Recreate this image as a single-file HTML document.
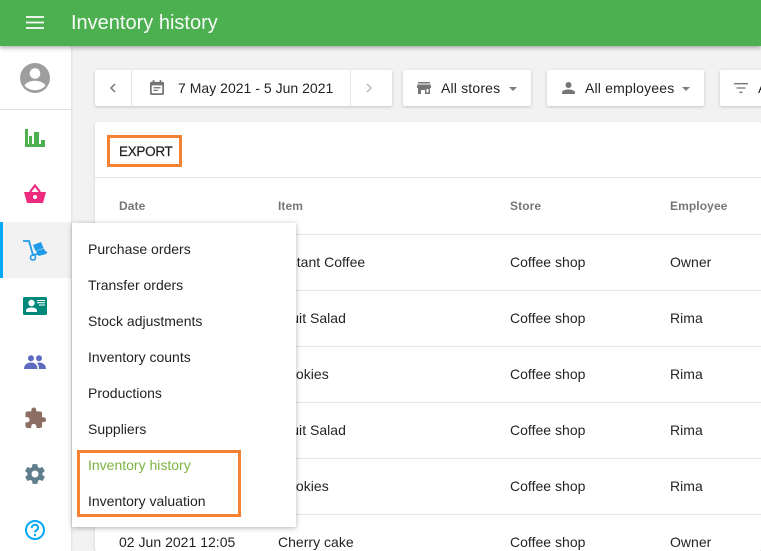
<!DOCTYPE html>
<html><head><meta charset="utf-8"><style>
html,body{margin:0;padding:0;width:761px;height:551px;overflow:hidden}
body{position:relative;background:#f2f2f2;font-family:"Liberation Sans",sans-serif;color:#212121;font-size:14px}
#w{position:absolute;left:0;top:0;width:761px;height:551px;overflow:hidden}
.a{position:absolute;white-space:nowrap}
.t{position:absolute;white-space:nowrap;line-height:20px;letter-spacing:.02px;color:rgba(0,0,0,.87)}
.bar{position:absolute;left:0;top:0;width:761px;height:46px;background:#4caf50;box-shadow:0 2px 4px rgba(0,0,0,.3);z-index:5}
.side{position:absolute;left:0;top:46px;width:71px;height:505px;background:#fff;box-shadow:1px 0 2px rgba(0,0,0,.08)}
.btn{position:absolute;top:70px;height:36px;background:#fff;border-radius:2px;box-shadow:0 1px 3px rgba(0,0,0,.2)}
.card{position:absolute;left:95px;top:122px;width:666px;height:429px;background:#fff;border-radius:2px;box-shadow:0 1px 3px rgba(0,0,0,.15)}
.ln{position:absolute;left:95px;width:666px;height:1px;background:#e6e6e6}
.menu{position:absolute;left:72px;top:223px;width:224px;height:304px;background:#fff;box-shadow:0 1px 5px rgba(0,0,0,.3);z-index:3}
.h{font-weight:bold;font-size:12px;color:rgba(0,0,0,.54);letter-spacing:.1px}
.f{letter-spacing:.17px}
.m{z-index:4;letter-spacing:0}
svg{position:absolute}
</style></head><body><div id="w">
<div class="side"></div>
<div class="a" style="left:0;top:109px;width:71px;height:1px;background:#e0e0e0"></div>
<div class="a" style="left:0;top:222px;width:71px;height:56px;background:#f2f2f2"></div>
<div class="a" style="left:0;top:222px;width:3px;height:56px;background:#03a9f4"></div>

<div class="bar"></div>
<svg style="left:26px;top:16px;z-index:6" width="18" height="14" viewBox="0 0 18 14"><path d="M0 1h18M0 6.500h18M0 12h18" stroke="#fff" stroke-width="1.800"/></svg>
<div class="a" style="left:71px;top:10px;font-size:20px;line-height:26px;z-index:6;color:rgba(255,255,255,.95)">Inventory history</div>

<svg style="left:20px;top:63px" width="30" height="30" viewBox="0 0 30 30"><circle cx="15" cy="15" r="15" fill="#9e9e9e"/><circle cx="15" cy="10.500" r="5.300" fill="#fff"/><path d="M4.500 22.500c1.500-3 6-4.800 10.500-4.800s9 1.800 10.500 4.800c-2.500 3-6.300 4.700-10.500 4.700s-8-1.700-10.500-4.700z" fill="#fff"/></svg>
<svg style="left:25px;top:129px" width="20" height="18" viewBox="0 0 20 18"><path d="M0 0h3v15h1V7h3v8h2V3h5v12h2V11h4v7H0z" fill="#4caf50"/></svg>
<svg style="left:24px;top:183px" width="22" height="20" viewBox="0 0 22 20"><path d="M0 9h22l-3 11H3z" fill="#ec2b7e"/><path d="M6 9l5-6.500L16 9" fill="none" stroke="#ec2b7e" stroke-width="2.200"/><circle cx="11" cy="14" r="2" fill="#fff"/></svg>
<svg style="left:23px;top:240px" width="24" height="21" viewBox="0 0 24 21"><path d="M0 1h6l4 14 14-3" fill="none" stroke="#1e9be8" stroke-width="1.800"/><circle cx="10" cy="17.500" r="2.500" fill="none" stroke="#1e9be8" stroke-width="1.600"/><path d="M10 5l8-3 2.500 6-8 3zM13 11l8-2.500 2.500 5.500-8 2z" fill="#1e9be8"/></svg>
<svg style="left:23px;top:297px" width="24" height="18" viewBox="0 0 24 18"><rect width="24" height="18" rx="1.500" fill="#00897b"/><circle cx="8.500" cy="6" r="3.200" fill="#fff"/><path d="M3 15v-1.500C3 11.500 6 10.500 8.500 10.500s5.500 1 5.500 3V15z" fill="#fff"/><path d="M14 3.500h8M14 5.700h8M16 8h6" stroke="#fff" stroke-width="1.100"/></svg>
<svg style="left:24px;top:355px" width="22" height="14" viewBox="0 0 22 14"><circle cx="7" cy="3.200" r="3" fill="#5c6bc0"/><circle cx="15" cy="3.200" r="3" fill="#5c6bc0"/><path d="M0 14c0-4 3-6.500 7-6.500s6.500 2.500 6.500 6.500zM15 14c0-2.500-.5-4.500-2-6 .7-.3 1.400-.5 2-.5 4 0 7 2.500 7 6.500z" fill="#5c6bc0"/></svg>
<svg style="left:25px;top:407px" width="21.500" height="21.500" viewBox="1.500 .5 22 22"><path fill="#8d6e63" d="M20.500 11H19V7c0-1.100-.9-2-2-2h-4V3.500C13 2.120 11.880 1 10.500 1S8 2.120 8 3.500V5H4c-1.100 0-1.990.9-1.990 2v3.800H3.500c1.490 0 2.700 1.210 2.700 2.700s-1.210 2.700-2.700 2.700H2V20c0 1.100.9 2 2 2h3.800v-1.500c0-1.490 1.210-2.700 2.700-2.700 1.490 0 2.700 1.210 2.700 2.700V22H17c1.100 0 2-.9 2-2v-4h1.500c1.380 0 2.500-1.120 2.500-2.500S21.880 11 20.500 11z"/></svg>
<svg style="left:25px;top:464px" width="20" height="20" viewBox="2 2 20 20"><path fill="#607d8b" d="M19.400 13c0-.3.100-.6.100-1s0-.7-.1-1l2.100-1.600c.2-.2.200-.4.100-.6l-2-3.500c-.1-.2-.4-.3-.6-.2l-2.500 1c-.5-.4-1.100-.7-1.700-1l-.4-2.600c0-.2-.2-.4-.5-.4h-4c-.3 0-.5.200-.5.400l-.4 2.600c-.6.300-1.200.6-1.700 1l-2.500-1c-.2-.1-.5 0-.6.200l-2 3.500c-.1.200-.1.400.1.600L4.500 11c0 .3-.1.700-.1 1s0 .7.100 1l-2.100 1.600c-.2.200-.2.400-.1.600l2 3.500c.1.200.4.300.6.200l2.500-1c.5.400 1.100.7 1.700 1l.4 2.600c0 .2.200.4.500.4h4c.3 0 .5-.2.500-.4l.4-2.600c.6-.3 1.200-.6 1.700-1l2.500 1c.2.100.5 0 .6-.2l2-3.500c.1-.2.100-.4-.1-.6zM12 15.500a3.500 3.500 0 1 1 0-7 3.500 3.500 0 0 1 0 7z"/></svg>
<svg style="left:25px;top:520px" width="20" height="20" viewBox="0 0 20 20"><circle cx="10" cy="10" r="9" fill="none" stroke="#03a9f4" stroke-width="2"/><path d="M6.800 8c0-1.900 1.400-3.200 3.200-3.200s3.200 1.300 3.200 3c0 2.300-3.200 2.500-3.200 4.700" fill="none" stroke="#03a9f4" stroke-width="2"/><path d="M9 14h2v2.200H9z" fill="#03a9f4"/></svg>

<div class="btn" style="left:95px;width:297px"></div>
<div class="a" style="left:131px;top:70px;width:1px;height:36px;background:#e6e6e6"></div>
<div class="a" style="left:350px;top:70px;width:1px;height:36px;background:#e6e6e6"></div>
<svg style="left:109px;top:83px" width="8" height="10" viewBox="0 0 8 10"><path d="M6 1L2 5l4 4" fill="none" stroke="#757575" stroke-width="1.500"/></svg>
<svg style="left:365px;top:83px" width="8" height="10" viewBox="0 0 8 10"><path d="M2 1l4 4-4 4" fill="none" stroke="#bdbdbd" stroke-width="1.500"/></svg>
<svg style="left:150px;top:80px" width="14" height="15" viewBox="0 0 16 17"><path d="M3 0h2v2h6V0h2v2h1.500c.8 0 1.500.7 1.500 1.500v12c0 .8-.7 1.500-1.500 1.500h-13C.7 17 0 16.300 0 15.500v-12C0 2.700.7 2 1.500 2H3zM2 6v9h12V6zM4 8h8v1.500H4zm0 3h5v1.500H4z" fill="#757575" fill-rule="evenodd"/></svg>
<div class="t" style="left:178px;top:78px">7 May 2021 - 5 Jun 2021</div>

<div class="btn" style="left:403px;width:128px"></div>
<svg style="left:417px;top:82px" width="14" height="12" viewBox="0 0 14 12"><path d="M1 0h12v1.500H1zM.3 2.500h13.400l.3 3.500H13v6H8V8H4v4H1V6H0zM9.500 7v3.500h2V7z" fill="#757575" fill-rule="evenodd"/></svg>
<div class="t f" style="left:441px;top:78px">All stores</div>
<svg style="left:509px;top:87px" width="8" height="4"><path d="M0 0h8L4 4z" fill="#7f7f7f"/></svg>

<div class="btn" style="left:547px;width:157px"></div>
<svg style="left:562px;top:82px" width="13" height="12" viewBox="0 0 13 12"><circle cx="6.500" cy="3" r="3" fill="#757575"/><path d="M0 12v-1.500C0 8.500 3.500 7.500 6.500 7.500s6.500 1 6.500 3V12z" fill="#757575"/></svg>
<div class="t f" style="left:585px;top:78px">All employees</div>
<svg style="left:682px;top:87px" width="8" height="4"><path d="M0 0h8L4 4z" fill="#7f7f7f"/></svg>

<div class="btn" style="left:720px;width:60px"></div>
<svg style="left:734px;top:83px" width="14" height="10" viewBox="0 0 14 10"><path d="M0 .7h14M2.500 5h9M5.500 9.300h3" stroke="#757575" stroke-width="1.300"/></svg>
<div class="t" style="left:758px;top:78px">All</div>

<div class="card"></div>
<div class="ln" style="top:177px"></div>
<div class="ln" style="top:234px"></div>
<div class="ln" style="top:290px"></div>
<div class="ln" style="top:346px"></div>
<div class="ln" style="top:402px"></div>
<div class="ln" style="top:458px"></div>
<div class="ln" style="top:514px"></div>

<div class="a" style="left:107px;top:135px;width:69px;height:26px;border:3px solid #f58232"></div>
<div class="t" style="left:119px;top:142px;font-size:13.500px;letter-spacing:-.3px;-webkit-text-stroke:.2px rgba(0,0,0,.87)">EXPORT</div>

<div class="t h" style="left:119px;top:196px">Date</div>
<div class="t h" style="left:278px;top:196px">Item</div>
<div class="t h" style="left:510px;top:196px">Store</div>
<div class="t h" style="left:670px;top:196px">Employee</div>

<div class="t" style="left:278px;top:252px">Instant Coffee</div><div class="t" style="left:510px;top:252px">Coffee shop</div><div class="t" style="left:670px;top:252px">Owner</div>
<div class="t" style="left:278px;top:308px">Fruit Salad</div><div class="t" style="left:510px;top:308px">Coffee shop</div><div class="t" style="left:670px;top:308px">Rima</div>
<div class="t" style="left:278px;top:364px">Cookies</div><div class="t" style="left:510px;top:364px">Coffee shop</div><div class="t" style="left:670px;top:364px">Rima</div>
<div class="t" style="left:278px;top:420px">Fruit Salad</div><div class="t" style="left:510px;top:420px">Coffee shop</div><div class="t" style="left:670px;top:420px">Rima</div>
<div class="t" style="left:278px;top:476px">Cookies</div><div class="t" style="left:510px;top:476px">Coffee shop</div><div class="t" style="left:670px;top:476px">Rima</div>
<div class="t" style="left:119px;top:532px">02 Jun 2021 12:05</div><div class="t" style="left:278px;top:532px">Cherry cake</div><div class="t" style="left:510px;top:532px">Coffee shop</div><div class="t" style="left:670px;top:532px">Owner</div>

<div class="menu"></div>
<div class="t m" style="left:88px;top:239px">Purchase orders</div>
<div class="t m" style="left:88px;top:275px">Transfer orders</div>
<div class="t m" style="left:88px;top:311px">Stock adjustments</div>
<div class="t m" style="left:88px;top:347px">Inventory counts</div>
<div class="t m" style="left:88px;top:383px">Productions</div>
<div class="t m" style="left:88px;top:419px">Suppliers</div>
<div class="t m" style="left:88px;top:455px;color:#7cb342">Inventory history</div>
<div class="t m" style="left:88px;top:491px">Inventory valuation</div>
<div class="a" style="z-index:4;left:77px;top:450px;width:158px;height:61px;border:3px solid #f58232"></div>
</div></body></html>
